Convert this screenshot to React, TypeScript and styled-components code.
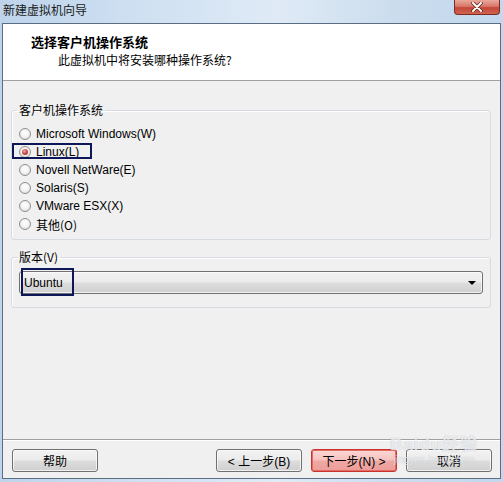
import React from "react";
import styled, { createGlobalStyle, css } from "styled-components";

const Global = createGlobalStyle`
  html, body { margin: 0; padding: 0; }
  body {
    width: 503px;
    height: 482px;
    overflow: hidden;
    font-family: "Liberation Sans", "Noto Sans CJK SC", sans-serif;
    font-size: 12px;
    color: #000;
  }
`;

const CJK = `"Noto Sans CJK SC", "Liberation Sans", sans-serif`;
const LATIN = `"Liberation Sans", "Noto Sans CJK SC", sans-serif`;

const Frame = styled.div`
  position: relative;
  width: 503px;
  height: 482px;
  box-sizing: border-box;
  display: flex;
  flex-direction: column;
  padding: 0 2px 3px 2px;
  background: linear-gradient(90deg, #bed4eb 0%, #d3e3f3 35%, #dfeaf6 55%, #cadced 80%, #c3d8ee 100%);
`;

const TitleBar = styled.div`
  height: 23px;
  display: flex;
  justify-content: space-between;
  align-items: flex-start;
  margin: 0 -2px;
`;

const TitleText = styled.span`
  font-family: ${CJK};
  font-size: 12px;
  line-height: 20px;
  padding-left: 3px;
  color: #1a1a1a;
`;

const CloseButton = styled.div`
  width: 46px;
  height: 15px;
  margin-right: 3px;
  box-sizing: border-box;
  border: 1px solid #7a2b25;
  border-top: none;
  border-radius: 0 0 4px 4px;
  background: linear-gradient(180deg, #e9a99c 0%, #d7786a 45%, #c4473a 55%, #d0634f 100%);
  display: flex;
  align-items: center;
  justify-content: center;
`;

const Client = styled.div`
  flex: 1;
  display: flex;
  flex-direction: column;
  border: 1px solid #5b6d82;
  background: #f0f0f0;
`;

const Header = styled.div`
  height: 57px;
  box-sizing: border-box;
  background: #fff;
  border-bottom: 1px solid #a0a0a0;
  padding: 9px 0 0 28px;
  display: flex;
  flex-direction: column;
`;

const HeaderTitle = styled.div`
  font-family: ${CJK};
  font-weight: bold;
  font-size: 13px;
  line-height: 17px;
`;

const HeaderSub = styled.div`
  font-family: ${CJK};
  font-size: 12px;
  line-height: 17px;
  padding-left: 27px;
  margin-top: 1px;
`;

const Body = styled.div`
  flex: 1;
  padding: 21px 9px 0 8px;
  display: flex;
  flex-direction: column;
  gap: 9px;
`;

const Group = styled.fieldset<{ $pad: string }>`
  margin: 0;
  padding: ${(p) => p.$pad};
  border: 1px solid #d5dbe0;
  border-radius: 3px;
  box-shadow: inset 1px 1px 0 #fff;
  min-width: 0;
`;

const Legend = styled.legend`
  font-family: ${CJK};
  font-size: 12px;
  line-height: 16px;
  padding: 0 2px;
  margin-left: -2px;
`;

const RadioRow = styled.div`
  position: relative;
  height: 18px;
  display: flex;
  align-items: center;
  gap: 5px;
  font-family: ${LATIN};
  font-size: 12px;
`;

const RadioLabel = styled.span<{ $cjk?: boolean }>`
  font-family: ${(p) => (p.$cjk ? CJK : LATIN)};
`;

const RadioCircle = styled.span<{ $checked?: boolean }>`
  width: 12px;
  height: 12px;
  box-sizing: border-box;
  border-radius: 50%;
  border: 1px solid #8e8f8f;
  background: radial-gradient(circle at 50% 40%, #ffffff 0%, #f4f4f4 45%, #d4d4d4 100%);
  display: flex;
  align-items: center;
  justify-content: center;
  ${(p) =>
    p.$checked &&
    css`
      &::after {
        content: "";
        width: 6px;
        height: 6px;
        border-radius: 50%;
        background: radial-gradient(circle at 40% 35%, #f3a9a9 0%, #c2413f 55%, #7e1818 100%);
      }
    `}
`;

const Highlight = styled.div<{ $left: number; $top: number; $w: number; $h: number }>`
  position: absolute;
  left: ${(p) => p.$left}px;
  top: ${(p) => p.$top}px;
  width: ${(p) => p.$w}px;
  height: ${(p) => p.$h}px;
  box-sizing: border-box;
  border: 2px solid #0d1658;
  pointer-events: none;
`;

const Combo = styled.div`
  position: relative;
  height: 23px;
  box-sizing: border-box;
  border: 1px solid #707070;
  border-radius: 3px;
  background: linear-gradient(180deg, #f2f2f2 0%, #ebebeb 48%, #dddddd 52%, #cfcfcf 100%);
  box-shadow: inset 0 0 0 1px rgba(255, 255, 255, 0.7);
  display: flex;
  align-items: center;
  justify-content: space-between;
  padding: 0 6px 0 4px;
  font-family: ${LATIN};
  font-size: 12px;
`;

const Arrow = styled.span`
  width: 0;
  height: 0;
  border-left: 4px solid transparent;
  border-right: 4px solid transparent;
  border-top: 4px solid #000;
`;

const Footer = styled.div`
  border-top: 1px solid #a0a0a0;
  box-shadow: inset 0 1px 0 #fff;
  padding: 9px 8px 6px 9px;
  display: flex;
  align-items: center;
  gap: 9px;
`;

const Spacer = styled.div`
  flex: 1;
`;

const Button = styled.div<{ $primary?: boolean }>`
  width: 86px;
  height: 23px;
  box-sizing: border-box;
  border: 1px solid #707070;
  border-radius: 3px;
  background: linear-gradient(180deg, #f2f2f2 0%, #ebebeb 48%, #dddddd 52%, #cfcfcf 100%);
  box-shadow: inset 0 0 0 1px rgba(255, 255, 255, 0.7);
  display: flex;
  align-items: center;
  justify-content: center;
  font-family: ${LATIN};
  font-size: 12px;
  ${(p) =>
    p.$primary &&
    css`
      border-color: #c9332c;
      background: linear-gradient(180deg, #fbd8d6 0%, #f6c1be 48%, #f0a9a5 52%, #ec9c98 100%);
      box-shadow: inset 0 0 0 1px #e46a63;
    `}
`;

const Watermark = styled.div`
  position: absolute;
  left: 384px;
  top: 428px;
  width: 100px;
  display: flex;
  flex-direction: column;
  align-items: center;
  color: rgba(255, 255, 255, 0.7);
  text-shadow: 0 0 1px rgba(120, 130, 150, 0.5);
  pointer-events: none;
`;

const WmMain = styled.div`
  font-family: ${LATIN};
  font-weight: bold;
  font-size: 17px;
  line-height: 18px;
  letter-spacing: 1px;
  margin-top: 8px;
`;

const WmSub = styled.div`
  font-family: ${LATIN};
  font-size: 10px;
  line-height: 12px;
`;

const radios = [
  "Microsoft Windows(W)",
  "Linux(L)",
  "Novell NetWare(E)",
  "Solaris(S)",
  "VMware ESX(X)",
  "其他(O)",
];

export default function App() {
  return (
    <>
      <Global />
      <Frame>
        <TitleBar>
          <TitleText>新建虚拟机向导</TitleText>
          <CloseButton>
            <svg width="12" height="10" viewBox="0 0 12 10">
              <path d="M2 1 L10 9 M10 1 L2 9" stroke="#5a1f1a" strokeWidth="3.4" strokeLinecap="round" />
              <path d="M2 1 L10 9 M10 1 L2 9" stroke="#ffffff" strokeWidth="2" strokeLinecap="round" />
            </svg>
          </CloseButton>
        </TitleBar>
        <Client>
          <Header>
            <HeaderTitle>选择客户机操作系统</HeaderTitle>
            <HeaderSub>此虚拟机中将安装哪种操作系统?</HeaderSub>
          </Header>
          <Body>
            <Group $pad="7px 7px 6px 7px">
              <Legend>客户机操作系统</Legend>
              {radios.map((r, i) => (
                <RadioRow key={r}>
                  <RadioCircle $checked={i === 1} />
                  <RadioLabel $cjk={i === 5}>{r}</RadioLabel>
                  {i === 1 && <Highlight $left={-7} $top={0} $w={80} $h={16} />}
                </RadioRow>
              ))}
            </Group>
            <Group $pad="6px 7px 13px 7px">
              <Legend>版本(V)</Legend>
              <Combo>
                <span>Ubuntu</span>
                <Arrow />
                <Highlight $left={1} $top={-4} $w={53} $h={28} />
              </Combo>
            </Group>
            <Spacer />
          </Body>
          <Footer>
            <Button>帮助</Button>
            <Spacer />
            <Button>&lt; 上一步(B)</Button>
            <Button $primary>下一步(N) &gt;</Button>
            <Button>取消</Button>
          </Footer>
        </Client>
        <Watermark>
          <WmMain>Baidu经验</WmMain>
          <WmSub>jingyan.baidu.com</WmSub>
        </Watermark>
      </Frame>
    </>
  );
}
